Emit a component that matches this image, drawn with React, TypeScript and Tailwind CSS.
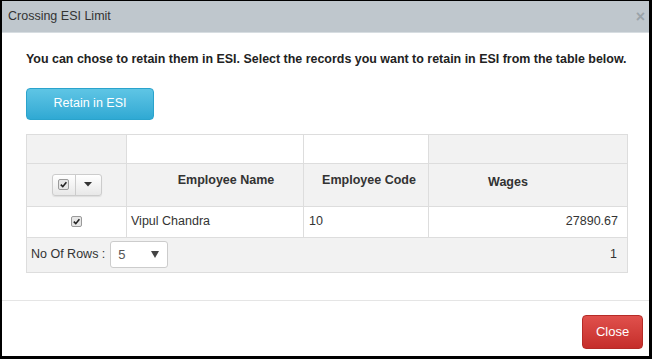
function Check() {
  return (
    <span className="inline-flex items-center justify-center w-[11px] h-[11px] rounded-[2px] border border-[#9a9a9a] bg-[#e6e6e6]">
      <svg width="9" height="9" viewBox="0 0 10 10">
        <path d="M2 5.2 L4.2 7.4 L8.2 2.4" stroke="#222" strokeWidth="1.8" fill="none" />
      </svg>
    </span>
  )
}

export default function App() {
  return (
    <div
      className="w-[652px] h-[359px] bg-black pl-[2px] pt-[1px] pr-[3px] pb-[3px]"
      style={{ fontFamily: '"Liberation Sans", Arial, sans-serif' }}
    >
      <div className="w-full h-full bg-white flex flex-col">
        {/* Header */}
        <div className="h-[32px] bg-[#bfc7cd] border-b border-[#d7dde1] flex items-center justify-between pl-[6px] pr-[4px] shrink-0">
          <span className="text-[12.5px] text-[#333]">Crossing ESI Limit</span>
          <span className="text-[16px] leading-none text-[#9aa3a9] font-bold">×</span>
        </div>

        {/* Body */}
        <div className="px-[24px] pt-[17px] flex flex-col">
          <p className="text-[12.45px] font-bold text-[#222] whitespace-nowrap">
            You can chose to retain them in ESI. Select the records you want to retain in ESI from the table below.
          </p>
          <button className="mt-[19px] w-[128px] h-[32px] rounded-[4px] bg-gradient-to-b from-[#5ec5e5] to-[#2fa9d3] border border-[#2aa3cc] text-white text-[12.5px]">
            Retain in ESI
          </button>

          {/* Table */}
          <div className="mt-[14px] w-[602px] border border-[#dddddd] text-[12.5px] text-[#333]">
            <div className="grid grid-cols-[100px_177px_125px_1fr]">
              <div className="h-[29px] bg-[#f2f2f2] border-r border-b border-[#dddddd]" />
              <div className="h-[29px] bg-white border-r border-b border-[#dddddd]" />
              <div className="h-[29px] bg-white border-r border-b border-[#dddddd]" />
              <div className="h-[29px] bg-[#f2f2f2] border-b border-[#dddddd]" />

              <div className="h-[43px] bg-[#f2f2f2] border-r border-b border-[#dddddd] flex items-center justify-center">
                <div className="flex h-[22px] rounded-[3px] border border-[#cccccc] bg-gradient-to-b from-white to-[#e8e8e8] shadow-[0_1px_1px_rgba(0,0,0,0.08)]">
                  <span className="w-[23px] flex items-center justify-center border-r border-[#cccccc]">
                    <Check />
                  </span>
                  <span className="w-[25px] flex items-center justify-center">
                    <svg width="8" height="5" viewBox="0 0 8 5"><path d="M0 0 H8 L4 4.5 Z" fill="#333" /></svg>
                  </span>
                </div>
              </div>
              <div className="h-[43px] bg-[#f2f2f2] border-r border-b border-[#dddddd] flex items-center justify-center font-bold pb-[8px] pl-[22px] whitespace-nowrap">
                Employee Name
              </div>
              <div className="h-[43px] bg-[#f2f2f2] border-r border-b border-[#dddddd] flex items-center justify-center font-bold pb-[8px] pl-[6px] whitespace-nowrap">
                Employee Code
              </div>
              <div className="h-[43px] bg-[#f2f2f2] border-b border-[#dddddd] flex items-center justify-center font-bold pb-[4px] pr-[40px]">
                Wages
              </div>

              <div className="h-[31px] bg-white border-r border-b border-[#dddddd] flex items-center justify-center">
                <Check />
              </div>
              <div className="h-[31px] bg-white border-r border-b border-[#dddddd] flex items-center pl-[4px]">
                Vipul Chandra
              </div>
              <div className="h-[31px] bg-white border-r border-b border-[#dddddd] flex items-center pl-[5px]">
                10
              </div>
              <div className="h-[31px] bg-white border-b border-[#dddddd] flex items-center justify-end pr-[9px]">
                27890.67
              </div>
            </div>
            <div className="h-[34px] bg-[#f2f2f2] flex items-center justify-between pl-[4px] pr-[10px]">
              <div className="flex items-center gap-[5px]">
                <span className="text-[#333]">No Of Rows :</span>
                <div className="w-[58px] h-[27px] rounded-[3px] border border-[#cccccc] bg-white flex items-center justify-between pl-[7px] pr-[8px]">
                  <span className="text-[13px] text-[#555]">5</span>
                  <svg width="8" height="7" viewBox="0 0 8 7"><path d="M0 0 H8 L4 7 Z" fill="#444" /></svg>
                </div>
              </div>
              <span>1</span>
            </div>
          </div>
        </div>

        {/* Footer */}
        <div className="mt-auto border-t border-[#e5e5e5] h-[56px] flex items-end justify-end pr-[6px] pb-[7px]">
          <button className="w-[61px] h-[34px] rounded-[4px] bg-gradient-to-b from-[#e0504c] to-[#c52d2a] border border-[#b52b27] text-white text-[13px]">
            Close
          </button>
        </div>
      </div>
    </div>
  )
}
